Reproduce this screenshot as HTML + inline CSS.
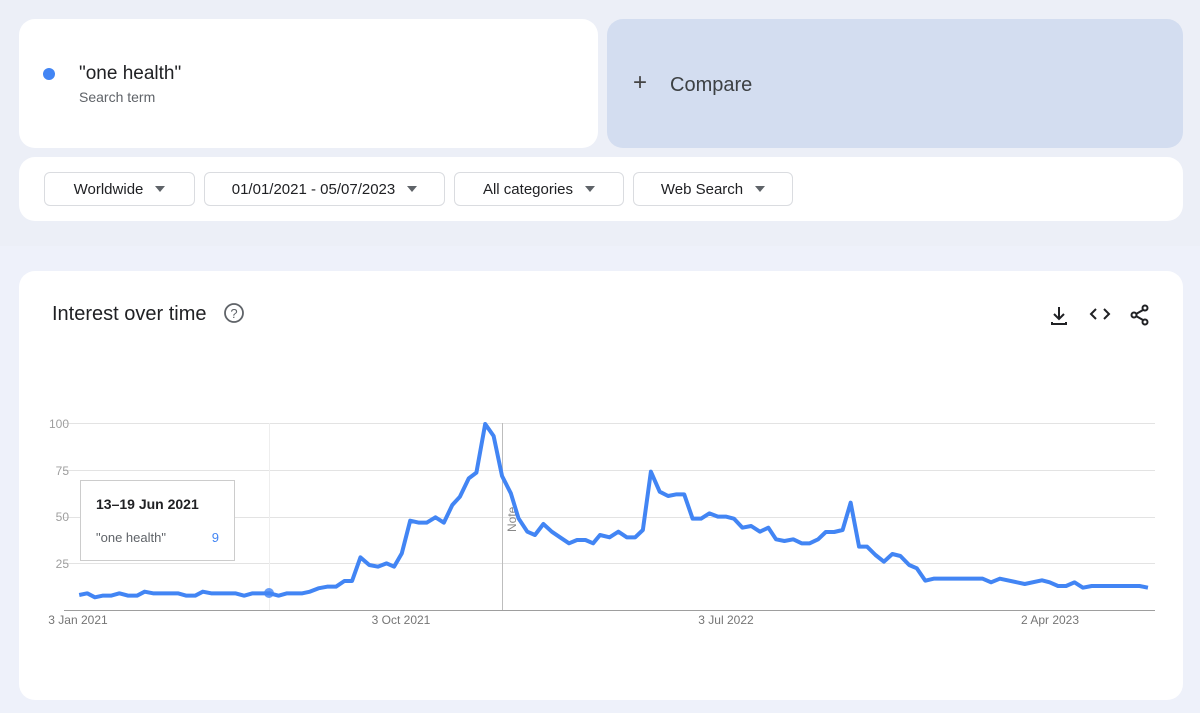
<!DOCTYPE html>
<html><head><style>
body{margin:0;width:1200px;height:713px;background:#eceff7;font-family:"Liberation Sans",Roboto,sans-serif;position:relative;overflow:hidden}
.c{position:absolute;background:#fff;border-radius:16px}
.pill{position:absolute;top:172px;height:34px;border:1px solid #dadce0;border-radius:6px;background:#fff;font-size:15px;color:#202124;display:flex;align-items:center;justify-content:center;gap:12px;box-sizing:border-box}
.tri{width:0;height:0;border-left:5px solid transparent;border-right:5px solid transparent;border-top:6px solid #5f6368}
</style></head><body>
<div style="position:absolute;left:0;top:246px;width:1200px;height:467px;background:#eef1fa"></div>
<div class="c" style="left:19px;top:19px;width:579px;height:129px">
 <div style="position:absolute;left:24px;top:49px;width:12px;height:12px;border-radius:50%;background:#4285f4"></div>
 <div style="position:absolute;left:60px;top:44px;font-size:19px;color:#202124">"one health"</div>
 <div style="position:absolute;left:60px;top:70px;font-size:14px;color:#5f6368">Search term</div>
</div>
<div class="c" style="left:607px;top:19px;width:576px;height:129px;background:#d3ddf0">
 <div style="position:absolute;left:26px;top:52px;font-size:24px;color:#444;line-height:24px;font-weight:300">+</div>
 <div style="position:absolute;left:63px;top:55px;font-size:20px;color:#3c4043">Compare</div>
</div>
<div class="c" style="left:19px;top:157px;width:1164px;height:64px"></div>
<div class="pill" style="left:44px;width:151px">Worldwide<span class="tri"></span></div>
<div class="pill" style="left:204px;width:241px">01/01/2021 - 05/07/2023<span class="tri"></span></div>
<div class="pill" style="left:454px;width:170px">All categories<span class="tri"></span></div>
<div class="pill" style="left:633px;width:160px">Web Search<span class="tri"></span></div>
<div class="c" style="left:19px;top:271px;width:1164px;height:429px"></div>
<div style="position:absolute;left:52px;top:303px;font-size:20px;color:#202124">Interest over time</div>
<svg width="1200" height="713" style="position:absolute;left:0;top:0">
 <circle cx="234" cy="313" r="9" fill="none" stroke="#5f6368" stroke-width="1.8"/>
 <text x="234" y="318" font-size="13" text-anchor="middle" fill="#5f6368" font-family="Liberation Sans">?</text>
 <g fill="none" stroke="#202124" stroke-width="2">
  <path d="M1059 307v12M1054 314l5 5 5-5M1052 322v2h14v-2"/>
  <path d="M1096 309l-5 5 5 5M1104 309l5 5-5 5"/>
  <circle cx="1145" cy="308" r="2.5"/><circle cx="1134" cy="315" r="2.5"/><circle cx="1145" cy="322" r="2.5"/>
  <path d="M1136 314l7-4M1136 316l7 4"/>
 </g>
 <g stroke="#e3e3e3" stroke-width="1">
  <path d="M64 423.5H1155M64 470.5H1155M64 517.5H1155M64 563.5H1155"/>
 </g>
 <path d="M64 610.5H1155" stroke="#9e9e9e"/>
 <path d="M269.5 423V610" stroke="#eee"/>
 <path d="M502.5 423V610" stroke="#bdbdbd"/>
 <text x="516" y="532" font-size="12" fill="#888" transform="rotate(-90 516 532)" font-family="Liberation Sans">Note</text>
 <g font-size="12" fill="#9e9e9e" font-family="Liberation Sans" text-anchor="end">
  <text x="69" y="428">100</text><text x="69" y="475">75</text><text x="69" y="521">50</text><text x="69" y="568">25</text>
 </g>
 <g font-size="12" fill="#757575" font-family="Liberation Sans" text-anchor="middle">
  <text x="78" y="624">3 Jan 2021</text><text x="401" y="624">3 Oct 2021</text><text x="726" y="624">3 Jul 2022</text><text x="1050" y="624">2 Apr 2023</text>
 </g>
 <g transform="translate(0,400) scale(0.382653,0.333333)">
 <polyline fill="none" stroke="#4285f4" stroke-width="4" vector-effect="non-scaling-stroke" stroke-linejoin="round" points="207,585 228,580 248,592 268,587 290,587 312,580 335,587 358,587 378,575 400,580 465,580 487,587 510,587 530,575 552,580 615,580 638,587 660,580 705,580 728,587 750,580 790,580 810,575 832,565 855,560 878,560 900,543 920,543 942,472 965,495 988,500 1010,490 1030,500 1050,460 1072,362 1095,368 1115,368 1138,352 1160,368 1182,315 1202,290 1225,235 1245,218 1268,72 1290,108 1312,228 1335,280 1355,355 1378,395 1398,405 1420,372 1442,395 1465,413 1487,430 1508,420 1530,420 1550,430 1568,405 1593,412 1616,395 1638,412 1660,412 1680,390 1701,215 1724,275 1746,288 1768,283 1788,283 1810,356 1832,356 1854,340 1876,350 1898,350 1918,356 1940,383 1963,378 1986,395 2008,383 2028,418 2050,423 2073,418 2095,430 2116,430 2138,418 2158,396 2180,396 2202,390 2223,308 2245,440 2266,440 2288,465 2310,485 2332,462 2353,468 2376,495 2396,505 2418,542 2440,536 2568,536 2590,547 2613,536 2678,552 2723,541 2743,547 2765,558 2786,558 2808,547 2830,563 2853,558 2978,558 3000,563"/>
 </g>
 <circle cx="269" cy="593" r="5" fill="#4285f4" opacity="0.8"/>
 <rect x="80.5" y="480.5" width="154" height="80" fill="#fff" stroke="#ccc"/>
 <text x="96" y="509" font-size="14" font-weight="bold" fill="#202124" font-family="Liberation Sans">13–19 Jun 2021</text>
 <text x="96" y="542" font-size="13" fill="#5f6368" font-family="Liberation Sans">"one health"</text>
 <text x="219" y="542" font-size="13" fill="#4285f4" text-anchor="end" font-family="Liberation Sans">9</text>
</svg>
</body></html>
